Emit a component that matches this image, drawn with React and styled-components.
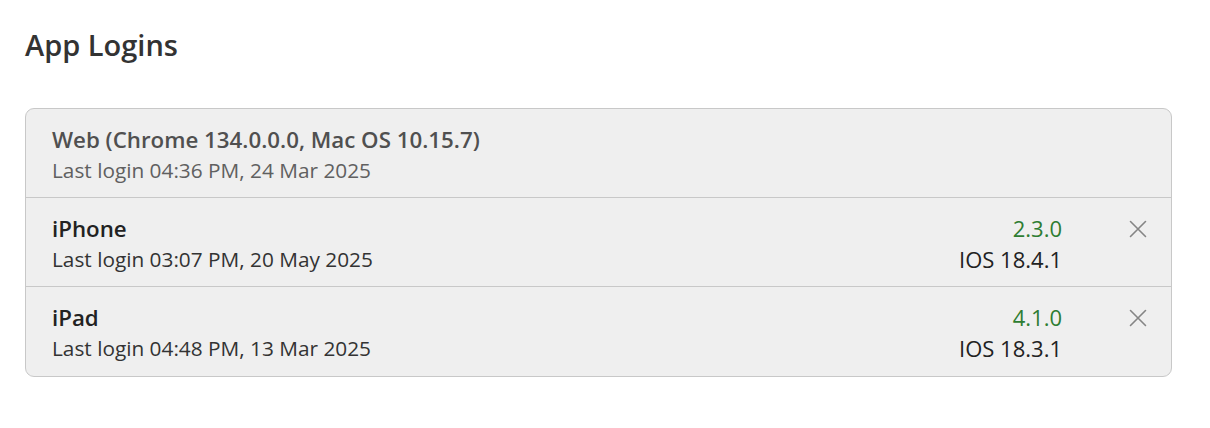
import React from "react";
import styled, { createGlobalStyle } from "styled-components";

const GlobalStyle = createGlobalStyle`
  body {
    margin: 0;
    background: #fff;
    font-family: "Open Sans", "Liberation Sans", sans-serif;
  }
`;

const Page = styled.div`
  padding: 25px 38px 0 25px;
`;

const Title = styled.h1`
  margin: 0 0 43px;
  font-size: 29px;
  line-height: 40px;
  font-weight: 600;
  color: #333;
`;

const Card = styled.div`
  background: #efefef;
  border: 1px solid #c8c8c8;
  border-radius: 9px;
  overflow: hidden;
`;

const Row = styled.div`
  display: flex;
  align-items: flex-start;
  padding: 15px 23px 11px 26px;
  &:last-child {
    padding-bottom: 12px;
  }
  & + & {
    border-top: 1px solid #c8c8c8;
  }
`;

const Info = styled.div`
  flex: 1;
  display: flex;
  flex-direction: column;
`;

const Name = styled.div`
  font-size: 22.3px;
  line-height: 31px;
  font-weight: 600;
  color: ${(p) => (p.$current ? "#505050" : "#222")};
`;

const Sub = styled.div`
  font-size: 20.8px;
  line-height: 31px;
  color: ${(p) => (p.$current ? "#606060" : "#333")};
`;

const Meta = styled.div`
  display: flex;
  flex-direction: column;
  align-items: flex-end;
  font-size: 22px;
  line-height: 31px;
  color: #222;
`;

const Version = styled.span`
  color: #2e7d32;
`;

const Close = styled.button`
  margin: 6px 0 0 66px;
  padding: 0;
  border: none;
  background: none;
  width: 20px;
  height: 20px;
  display: flex;
  align-items: center;
  justify-content: center;
  color: #858585;
  cursor: pointer;
`;

const CloseIcon = () => (
  <svg width="18" height="18" viewBox="0 0 18 18" fill="none">
    <path d="M1.5 1.5L16.5 16.5M16.5 1.5L1.5 16.5" stroke="currentColor" strokeWidth="1.6" strokeLinecap="round" />
  </svg>
);

const logins = [
  { name: "Web (Chrome 134.0.0.0, Mac OS 10.15.7)", last: "04:36 PM, 24 Mar 2025", current: true },
  { name: "iPhone", last: "03:07 PM, 20 May 2025", version: "2.3.0", os: "IOS 18.4.1" },
  { name: "iPad", last: "04:48 PM, 13 Mar 2025", version: "4.1.0", os: "IOS 18.3.1" },
];

export default function App() {
  return (
    <Page>
      <GlobalStyle />
      <Title>App Logins</Title>
      <Card>
        {logins.map((l) => (
          <Row key={l.name}>
            <Info>
              <Name $current={l.current}>{l.name}</Name>
              <Sub $current={l.current}>Last login {l.last}</Sub>
            </Info>
            {!l.current && (
              <>
                <Meta>
                  <Version>{l.version}</Version>
                  <span>{l.os}</span>
                </Meta>
                <Close aria-label="Remove">
                  <CloseIcon />
                </Close>
              </>
            )}
          </Row>
        ))}
      </Card>
    </Page>
  );
}
